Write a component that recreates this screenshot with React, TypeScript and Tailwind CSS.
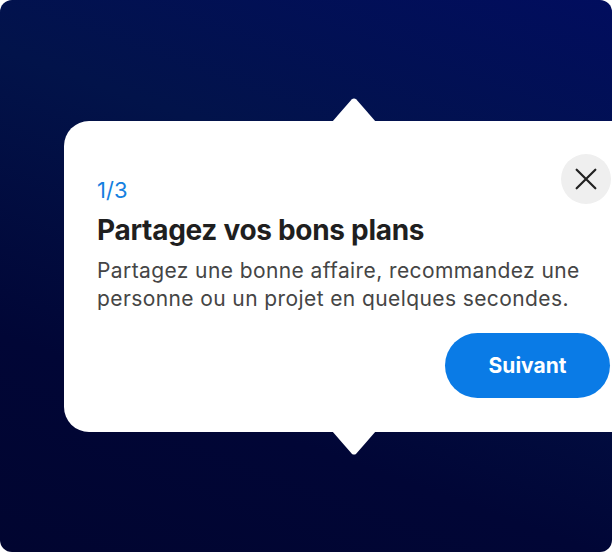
import React from 'react';

const Arrow: React.FC<{ down?: boolean; className: string }> = ({ down, className }) => (
  <svg
    viewBox="0 0 44 24"
    className={className}
    style={down ? { transform: 'rotate(180deg)' } : undefined}
  >
    <path d="M0 24 L19.6 1.6 Q22 -0.8 24.4 1.6 L44 24 Z" fill="#ffffff" />
  </svg>
);

const App: React.FC = () => {
  return (
    <div className="w-[612px] h-[552px] overflow-hidden rounded-[12px] bg-[linear-gradient(200deg,#010d5e_0%,#02134a_35%,#010636_72%,#010530_100%)] font-['Inter','Noto_Sans',sans-serif]">
      <div className="relative ml-[64px] mt-[121px] flex w-[580px] h-[311px] flex-col rounded-[25px] bg-white pl-[33px] pr-[33px] pt-[33px]">
        <Arrow className="absolute left-[268px] -top-[23px] w-[44px] h-[24px]" />
        <Arrow down className="absolute left-[268px] -bottom-[23px] w-[44px] h-[24px]" />

        <div className="flex items-end justify-between">
          <span className="text-[22px] leading-[28px] text-[#1580e0]">1/3</span>
          <button className="flex h-[50px] w-[50px] items-center justify-center rounded-full bg-[#efefef]">
            <svg viewBox="0 0 24 24" className="h-[28px] w-[28px]" fill="none" stroke="#222222" strokeWidth="1.9" strokeLinecap="round">
              <path d="M4 4 L20 20 M20 4 L4 20" />
            </svg>
          </button>
        </div>

        <h2 className="mt-[8px] text-[28px] leading-[36px] font-bold text-[#1f1f1f] tracking-[-0.3px]">
          Partagez vos bons plans
        </h2>
        <p className="mt-[9px] text-[21px] leading-[28px] text-[#454545] tracking-[0.4px]">
          Partagez une bonne affaire, recommandez une
          <br />
          personne ou un projet en quelques secondes.
        </p>
        <div className="mt-[20px] flex justify-end pr-[1px]">
          <button className="h-[65px] w-[165px] rounded-full bg-[#0a7be6] text-[21px] font-bold text-white">
            Suivant
          </button>
        </div>
      </div>
    </div>
  );
};

export default App;
